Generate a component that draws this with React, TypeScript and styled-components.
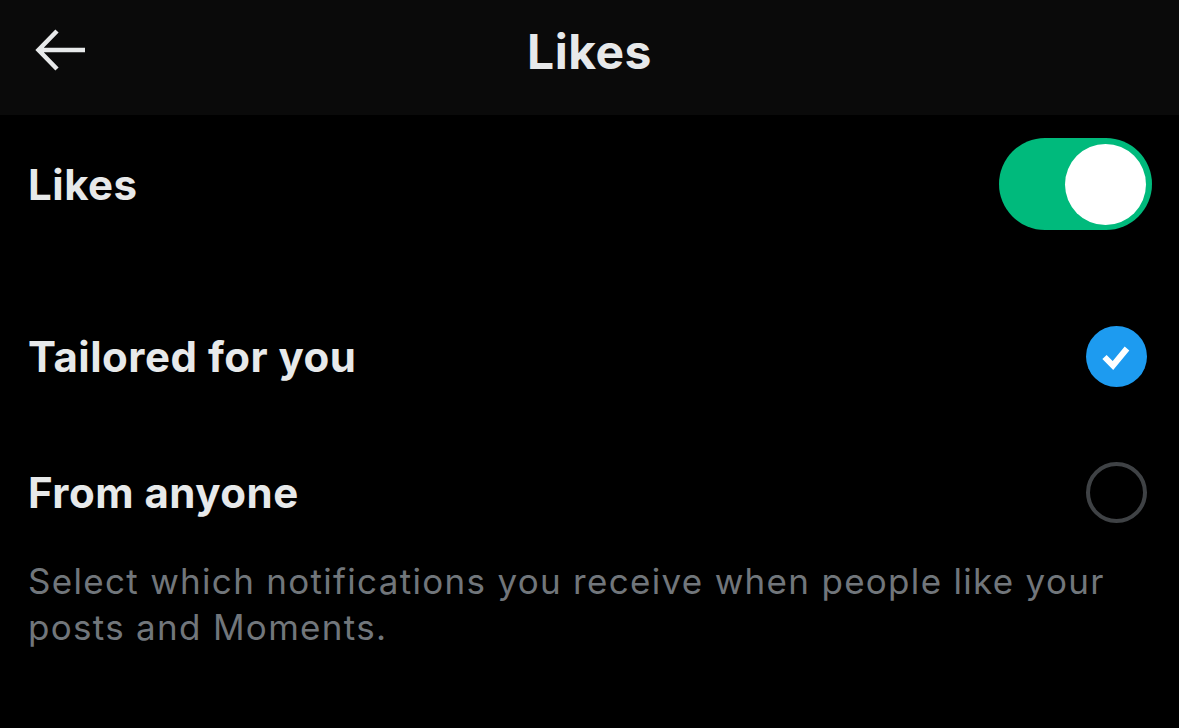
import React, { useState } from 'react'
import styled, { createGlobalStyle } from 'styled-components'

const GlobalStyle = createGlobalStyle`
  html, body {
    margin: 0;
    padding: 0;
    background: #000;
  }
  body {
    font-family: Inter, "Noto Sans", "Liberation Sans", sans-serif;
    color: #e7e9ea;
  }
`

type Audience = 'tailored' | 'anyone'

export default function App() {
  const [enabled, setEnabled] = useState(true)
  const [audience, setAudience] = useState<Audience>('tailored')

  return (
    <Page>
      <GlobalStyle />
      <Header>
        <BackButton aria-label="Back">
          <svg width="52" height="44" viewBox="0 0 52 44" fill="none">
            <path
              d="M50 22H4M22 3L3.5 22L22 41"
              stroke="#e7e9ea"
              strokeWidth="4.5"
              strokeLinecap="butt"
              strokeLinejoin="miter"
            />
          </svg>
        </BackButton>
        <Title>Likes</Title>
      </Header>
      <Content>
        <ToggleRow>
          <Label>Likes</Label>
          <Switch $on={enabled} onClick={() => setEnabled(!enabled)}>
            <Knob />
          </Switch>
        </ToggleRow>
        <Options>
          <OptionRow onClick={() => setAudience('tailored')}>
            <Label>Tailored for you</Label>
            <Radio checked={audience === 'tailored'} />
          </OptionRow>
          <OptionRow onClick={() => setAudience('anyone')}>
            <Label>From anyone</Label>
            <Radio checked={audience === 'anyone'} />
          </OptionRow>
        </Options>
        <Description>
          Select which notifications you receive when people like your posts
          and Moments.
        </Description>
      </Content>
    </Page>
  )
}

function Radio({ checked }: { checked: boolean }) {
  return (
    <RadioBox>
      {checked ? (
        <svg width="61" height="61" viewBox="0 0 61 61">
          <circle cx="30.5" cy="30.5" r="30.5" fill="#1d9bf0" />
          <path
            d="M18.5 31L27 39.5L41 22.5"
            stroke="#fff"
            strokeWidth="6"
            fill="none"
            strokeLinecap="butt"
            strokeLinejoin="miter"
          />
        </svg>
      ) : (
        <svg width="61" height="61" viewBox="0 0 61 61">
          <circle cx="30.5" cy="30.5" r="28.5" fill="none" stroke="#3f4245" strokeWidth="4" />
        </svg>
      )}
    </RadioBox>
  )
}

const Page = styled.div`
  width: 1179px;
  min-height: 728px;
  background: #000;
`

const Header = styled.header`
  position: relative;
  height: 115px;
  background: #0a0a0a;
  display: flex;
  align-items: center;
  justify-content: center;
`

const BackButton = styled.button`
  position: absolute;
  left: 35px;
  top: 28px;
  padding: 0;
  border: 0;
  background: none;
  display: flex;
`

const Title = styled.h1`
  margin: 0;
  margin-top: -12px;
  font-size: 48px;
  font-weight: 700;
  letter-spacing: 0.5px;
  color: #e7e9ea;
`

const Content = styled.main`
  padding: 0 27px 0 28px;
`

const ToggleRow = styled.div`
  height: 138px;
  display: flex;
  align-items: center;
  justify-content: space-between;
`

const Options = styled.div`
  margin-top: 35px;
`

const OptionRow = styled.div`
  height: 136px;
  display: flex;
  align-items: center;
  justify-content: space-between;
  cursor: pointer;
`

const Label = styled.span`
  font-size: 42px;
  font-weight: 650;
  letter-spacing: 0.5px;
  color: #e7e9ea;
`

const Switch = styled.button<{ $on: boolean }>`
  width: 153px;
  height: 92px;
  padding: 0 6px;
  border: 0;
  border-radius: 46px;
  background: ${(p) => (p.$on ? '#00ba7c' : '#3f4245')};
  display: flex;
  align-items: center;
  justify-content: ${(p) => (p.$on ? 'flex-end' : 'flex-start')};
  cursor: pointer;
`

const Knob = styled.span`
  width: 81px;
  height: 81px;
  border-radius: 50%;
  background: #fff;
`

const RadioBox = styled.span`
  display: flex;
  margin-right: 5px;
`

const Description = styled.p`
  margin: -2px 0 0;
  font-size: 35px;
  line-height: 46px;
  font-weight: 400;
  letter-spacing: 1.3px;
  color: #71767b;
  max-width: 1110px;
`
